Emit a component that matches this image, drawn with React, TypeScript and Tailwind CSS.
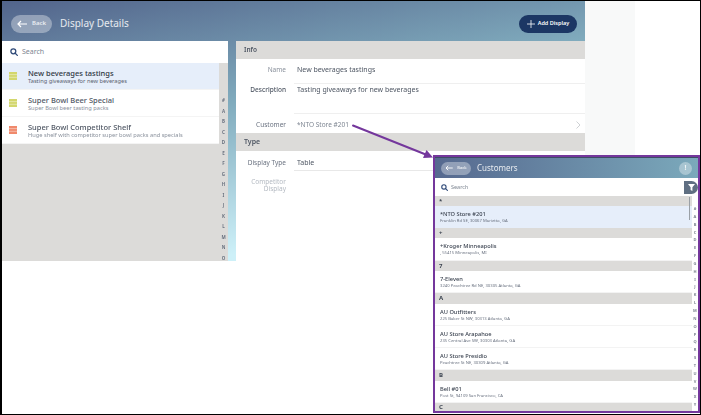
const font = { fontFamily: '"Noto Sans", "Open Sans", sans-serif' };

const letters = "#ABCDEFGHIJKLMNO".split("");
const overlayLetters = "#ABCDEFGHIJKLMNOPQRSTUVWXY".split("");

const displays = [
  { title: "New beverages tastings", sub: "Tasting giveaways for new beverages", color: "#d3d76d", active: true },
  { title: "Super Bowl Beer Special", sub: "Super Bowl beer tasting packs", color: "#d3d76d", active: false },
  { title: "Super Bowl Competitor Shelf", sub: "Huge shelf with competitor super bowl packs and specials", color: "#f0896c", active: false },
];

type Entry =
  | { head: string; h: string }
  | { name: string; addr: string; h: string; active?: boolean };

const customers: Entry[] = [
  { head: "*", h: "h-[10px]" },
  { name: "*NTO Store #201", addr: "Franklin Rd SE, 30067 Marietta, GA", h: "h-[22px]", active: true },
  { head: "+", h: "h-[10px]" },
  { name: "+Kroger Minneapolis", addr: ", 55415 Minneapolis, MI", h: "h-[23px]" },
  { head: "7", h: "h-[10px]" },
  { name: "7-Eleven", addr: "3240 Peachtree Rd NE, 30305 Atlanta, GA", h: "h-[22px]" },
  { head: "A", h: "h-[11px]" },
  { name: "AU Outfitters", addr: "225 Baker St NW, 30313 Atlanta, GA", h: "h-[22px]" },
  { name: "AU Store Arapahoe", addr: "235 Central Ave SW, 30303 Atlanta, GA", h: "h-[22px]" },
  { name: "AU Store Presidio", addr: "Peachtree St NE, 30309 Atlanta, GA", h: "h-[22px]" },
  { head: "B", h: "h-[11px]" },
  { name: "Bell #01", addr: "Post St, 94109 San Francisco, CA", h: "h-[22px]" },
  { head: "C", h: "h-[8px]" },
];

function SearchIcon({ size }: { size: number }) {
  return (
    <svg width={size} height={size} viewBox="0 0 12 12" fill="none" stroke="#2f4a78" strokeWidth="1.9">
      <circle cx="5" cy="5" r="3.7" />
      <path d="M7.8 7.8 11 11" strokeLinecap="round" />
    </svg>
  );
}

function ListGlyph({ color }: { color: string }) {
  return (
    <svg width="8" height="8" viewBox="0 0 8 8">
      <rect width="8" height="8" fill={color} />
      <path d="M0 2.6h8M0 5.3h8" stroke="#fff" strokeWidth="0.6" opacity="0.7" />
    </svg>
  );
}

function BackButton({ small }: { small?: boolean }) {
  return (
    <div
      className={
        small
          ? "flex h-[13px] w-[30px] items-center justify-center gap-1 rounded-full bg-white/35"
          : "flex h-[18px] w-[41px] items-center justify-center gap-[5px] rounded-full bg-white/35"
      }
    >
      <svg width={small ? 8 : 10} height={small ? 6 : 8} viewBox="0 0 10 8" fill="none" stroke="#fff" strokeWidth="1.2">
        <path d="M10 4H1M4 1 1 4l3 3" />
      </svg>
      <span className={small ? "text-[4px] font-semibold text-white/80" : "text-[6px] font-semibold text-white/80"}>Back</span>
    </div>
  );
}

function Field({ label, value, labelClass, valueClass, rowClass, lineClass }: { label: string; value: string; labelClass: string; valueClass: string; rowClass: string; lineClass: string }) {
  return (
    <div className={`flex ${rowClass}`}>
      <div className={`w-[50px] shrink-0 text-right text-[6.5px] leading-[7px] ${labelClass}`}>{label}</div>
      <div className={`ml-[8px] flex-1 pl-[3px] leading-[8px] ${valueClass} ${lineClass}`}>{value}</div>
    </div>
  );
}

function CustomersPanel() {
  return (
    <div className="absolute left-[431px] top-[154px] flex h-[258px] w-[267px] flex-col border-2 border-[#74379c] bg-white blur-[0.35px]">
      <div className="flex h-[21px] shrink-0 items-center border-t border-[#3e4c66] bg-gradient-to-r from-[#56698f] to-[#7ba9bb] px-[6px]">
        <BackButton small />
        <span className="ml-[6px] text-[8px] text-white/85">Customers</span>
        <div className="ml-auto flex size-[13px] items-center justify-center rounded-full bg-white/35 text-[7px] font-bold text-white/80">!</div>
      </div>
      <div className="relative flex h-[18px] shrink-0 items-center gap-[3px] pl-[6px]">
        <SearchIcon size={7} />
        <span className="text-[5.5px] text-[#7d8591]">Search</span>
        <div className="absolute right-0 top-[3px] flex h-[13px] w-[14px] items-center justify-center rounded-l-[2px] rounded-r-full bg-[#5f6f82]">
          <svg width="7" height="7" viewBox="0 0 7 7">
            <path d="M0 0h7L4.4 3.2V7L2.6 6V3.2z" fill="#fff" />
          </svg>
        </div>
      </div>
      <div className="flex min-h-0 flex-1">
        <div className="relative flex min-w-0 flex-1 flex-col">
          {customers.map((c, i) =>
            "head" in c ? (
              <div key={i} className={`flex ${c.h} items-center bg-[#dcdbd9] pl-[4px] text-[6px] font-bold text-[#3b4350]`}>
                {c.head}
              </div>
            ) : (
              <div key={i} className={`flex ${c.h} flex-col justify-center pl-[5px] ${c.active ? "bg-[#e6eefa]" : "border-b border-[#f3f3f3] bg-white"}`}>
                <div className="text-[5.7px] font-medium leading-[8px] text-[#3b4350]">{c.name}</div>
                <div className="text-[4.2px] leading-[6px] text-[#6a7280]">{c.addr}</div>
              </div>
            ),
          )}
          <div className="absolute right-[2px] top-[1px] h-[23px] w-[1px] bg-[#9aa0a6]" />
        </div>
        <div className="flex w-[6px] shrink-0 flex-col items-center bg-white pt-[9px] text-[4px] font-bold leading-[7.84px] text-[#7d8591]">
          {overlayLetters.map((l) => (
            <span key={l}>{l}</span>
          ))}
        </div>
      </div>
    </div>
  );
}

export default function App() {
  return (
    <div className="relative h-[415px] w-[701px] overflow-hidden border border-l-2 border-black bg-white" style={font}>
      <div className="flex items-start blur-[0.35px]">
        <div className="h-[260px] w-[583px] shrink-0 bg-[linear-gradient(170deg,#52648b_0%,#80abbd_39%,#cdf0f8_81%,#cdf0f8_100%)]">
          <div className="flex h-[40px] items-center pl-[9px] pr-[8px] pt-[5px]">
            <BackButton />
            <span className="ml-[8px] text-[10px] text-white/85">Display Details</span>
            <div className="ml-auto flex h-[18px] w-[58px] items-center justify-center gap-[3px] rounded-full bg-[#1c3764]">
              <svg width="8" height="8" viewBox="0 0 8 8" stroke="#fff" strokeWidth="0.8">
                <path d="M4 0v8M0 4h8" />
              </svg>
              <span className="text-[5.5px] font-semibold text-white">Add Display</span>
            </div>
          </div>
          <div className="flex h-[220px]">
            <div className="flex w-[226px] shrink-0 flex-col bg-[#dcdbd9]">
              <div className="flex h-[22px] shrink-0 items-center gap-[4px] bg-white pl-[8px]">
                <SearchIcon size={8} />
                <span className="text-[7px] text-[#7d8591]">Search</span>
              </div>
              <div className="flex min-h-0 flex-1">
                <div className="min-w-0 flex-1">
                  {displays.map((d) => (
                    <div key={d.title} className={`flex h-[27px] items-center border-b border-[#f4f4f4] ${d.active ? "bg-[#e6eefa]" : "bg-white"}`}>
                      <div className="ml-[7px] w-[19px] shrink-0">
                        <ListGlyph color={d.color} />
                      </div>
                      <div>
                        <div className={`text-[7.5px] font-medium leading-[10px] ${d.active ? "text-[#2e3642]" : "text-[#4e5663]"}`}>{d.title}</div>
                        <div className={`text-[5.7px] leading-[7px] ${d.active ? "text-[#5a6270]" : "text-[#8a919c]"}`}>{d.sub}</div>
                      </div>
                    </div>
                  ))}
                </div>
                <div className="flex w-[9px] shrink-0 flex-col items-center pt-[32px] text-[4.5px] font-bold leading-[10.5px] text-[#6a7280]">
                  {letters.map((l) => (
                    <span key={l}>{l}</span>
                  ))}
                </div>
              </div>
            </div>
            <div className="ml-[8px] min-w-0 flex-1 self-stretch">
              <div className="flex h-[18px] items-center bg-[#dcdbd9] pl-[8px] text-[6.5px] font-semibold text-[#4e5663]">Info</div>
              <div className="h-[202px] bg-white">
                <div className="pt-[7px]">
                  <Field label="Name" value="New beverages tastings" labelClass="text-[#8a919c]" valueClass="text-[7px] text-[#4e5663]" rowClass="h-[18px]" lineClass="border-b border-[#efefef]" />
                  <Field label="Description" value="Tasting giveaways for new beverages" labelClass="font-medium text-[#4e5663]" valueClass="text-[7px] text-[#4e5663]" rowClass="mt-[1px] pt-[1px] h-[29px]" lineClass="border-b border-[#efefef]" />
                  <div className="relative mt-[7px]">
                    <Field label="Customer" value="*NTO Store #201" labelClass="text-[#6a7280]" valueClass="text-[6.5px] text-[#7d8591]" rowClass="h-[12px] items-start" lineClass="" />
                    <svg className="absolute right-[4px] top-0" width="5" height="8" viewBox="0 0 5 8" fill="none" stroke="#b9bdc2" strokeWidth="0.7">
                      <path d="M.5.5 4 4 .5 7.5" />
                    </svg>
                  </div>
                </div>
                <div className="flex h-[18px] items-center bg-[#dcdbd9] pl-[8px] text-[7px] font-semibold text-[#4e5663]">Type</div>
                <div className="pt-[8px]">
                  <Field label="Display Type" value="Table" labelClass="text-[#6a7280]" valueClass="text-[7px] text-[#4e5663]" rowClass="h-[12px]" lineClass="border-b border-[#e8e8e8]" />
                  <Field label="Competitor Display" value="" labelClass="text-[#b4bac2]" valueClass="" rowClass="mt-[7px]" lineClass="" />
                </div>
              </div>
            </div>
          </div>
        </div>
        <div className="h-[155px] w-[50px] bg-[#f8f9f9]" />
      </div>
      <svg className="absolute left-0 top-0" width="701" height="415" fill="none">
        <path d="M351 124.5 425 154" stroke="#74379c" strokeWidth="2" strokeLinecap="round" />
        <path d="M431 156.5 421 157 424.5 149z" fill="#74379c" />
      </svg>
      <CustomersPanel />
    </div>
  );
}
